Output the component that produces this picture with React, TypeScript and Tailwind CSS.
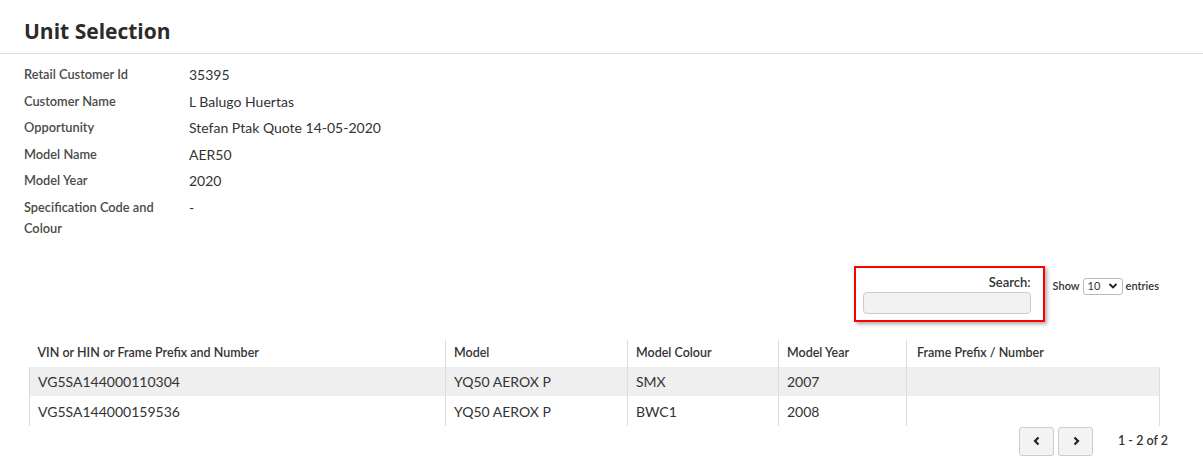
import React from "react";

const info: [string, string][] = [
  ["Retail Customer Id", "35395"],
  ["Customer Name", "L Balugo Huertas"],
  ["Opportunity", "Stefan Ptak Quote 14-05-2020"],
  ["Model Name", "AER50"],
  ["Model Year", "2020"],
  ["Specification Code and Colour", "-"],
];

const rows = [
  ["VG5SA144000110304", "YQ50 AEROX P", "SMX", "2007", ""],
  ["VG5SA144000159536", "YQ50 AEROX P", "BWC1", "2008", ""],
];

export default function App() {
  return (
    <div className="bg-white min-h-[471px] text-[#333] font-['Lato','Noto_Sans',sans-serif]">
      {/* Page header */}
      <div className="h-[54px] border-b border-[#dddddd] px-6 pt-[17px]">
        <h1 className="text-[21px] font-bold text-[#2b2b2b] leading-7 font-['Open_Sans','Lato',sans-serif]">Unit Selection</h1>
      </div>

      {/* Details */}
      <div className="px-6 pt-[10px]">
        {info.map(([label, value]) => (
          <div key={label} className="flex items-start min-h-[26.6px]">
            <div className="w-[165px] pr-6 text-[12.8px] font-semibold text-[#4a4a4a] leading-[21px]">
              {label}
            </div>
            <div className="text-[14px] text-[#333] leading-[21px]">{value}</div>
          </div>
        ))}
      </div>

      {/* Controls */}
      <div className="flex justify-end items-start pr-[44px] mt-[27px]">
        <div className="w-[191px] h-[56px] border-2 border-[#ff0000] shadow-[2px_2px_4px_rgba(0,0,0,0.35)] pl-[7px] pt-[6px] flex flex-col items-start">
          <label className="w-[168px] text-right text-[13px] font-semibold text-[#333] leading-4">Search:</label>
          <input className="mt-[2px] w-[168px] h-[22px] bg-[#f2f2f2] border border-[#cccccc] rounded-[4px]" />
        </div>
        <div className="flex items-center ml-[8px] mt-[12px] text-[11px] font-semibold text-[#333]">
          <span>Show</span>
          <div className="mx-[3px] w-[40px] h-[17px] border border-[#bbbbbb] rounded-[3px] bg-white flex items-center justify-between px-[4px] font-normal">
            <span>10</span>
            <svg width="10" height="8" viewBox="0 0 10 8">
              <path d="M1.5 2 L5 5.5 L8.5 2" fill="none" stroke="#222" strokeWidth="1.8" />
            </svg>
          </div>
          <span>entries</span>
        </div>
      </div>

      {/* Table */}
      <div className="ml-[29px] w-[1131px] mt-[18px]">
        <table className="w-full border-collapse text-left">
          <thead>
            <tr className="h-[27px]">
              <th className="w-[416px] pl-2 text-[12.5px] font-semibold text-[#333]">VIN or HIN or Frame Prefix and Number</th>
              <th className="w-[182px] pl-2 text-[12.5px] font-semibold text-[#333] border-l border-[#dddddd]">Model</th>
              <th className="w-[151px] pl-2 text-[12.5px] font-semibold text-[#333] border-l border-[#dddddd]">Model Colour</th>
              <th className="w-[128px] pl-2 text-[12.5px] font-semibold text-[#333] border-l border-[#dddddd]">Model Year</th>
              <th className="pl-[10px] text-[12.5px] font-semibold text-[#333] border-l border-[#dddddd]">Frame Prefix / Number</th>
            </tr>
          </thead>
          <tbody>
            {rows.map((r, i) => (
              <tr key={r[0]} className={`h-[29.5px] ${i === 0 ? "bg-[#efefef]" : "bg-white"}`}>
                {r.map((c, j) => (
                  <td
                    key={j}
                    className={`pl-2 text-[14px] text-[#333] border-l border-[#dddddd] ${j === 4 ? "border-r pl-[10px]" : ""}`}
                  >
                    {c}
                  </td>
                ))}
              </tr>
            ))}
          </tbody>
        </table>
      </div>

      {/* Pagination */}
      <div className="flex justify-end items-center pr-[30px] mt-px">
        <button className="w-[35px] h-[29px] border border-[#cccccc] rounded-[3px] bg-[#f3f3f3] flex items-center justify-center">
          <svg width="10" height="10" viewBox="0 0 10 10">
            <path d="M6.5 1.5 L3 5 L6.5 8.5" fill="none" stroke="#222" strokeWidth="2.2" />
          </svg>
        </button>
        <button className="ml-[4px] w-[35px] h-[29px] border border-[#cccccc] rounded-[3px] bg-[#f3f3f3] flex items-center justify-center">
          <svg width="10" height="10" viewBox="0 0 10 10">
            <path d="M3.5 1.5 L7 5 L3.5 8.5" fill="none" stroke="#222" strokeWidth="2.2" />
          </svg>
        </button>
        <span className="ml-[25px] w-[55px] whitespace-nowrap text-[12.5px] font-semibold text-[#333]">1 - 2 of 2</span>
      </div>
    </div>
  );
}
